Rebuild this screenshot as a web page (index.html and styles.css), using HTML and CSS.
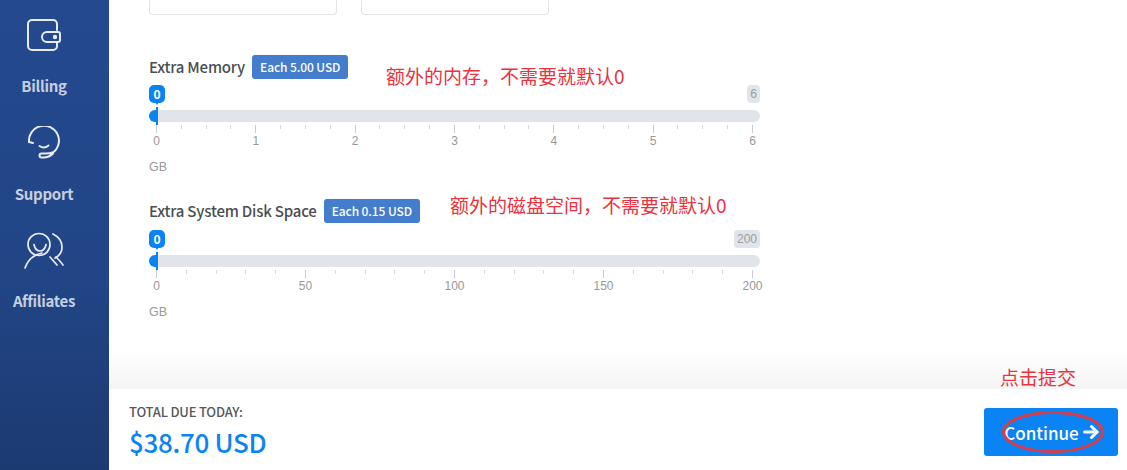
FILE: index.html
```html
<!DOCTYPE html>
<html lang="zh-CN">
<head>
<meta charset="utf-8">
<title>Extra resources</title>
<link rel="stylesheet" href="styles.css">
</head>
<body>
<div class="page">
  <nav class="sidebar">
    <a class="nav-item nav-billing">
      <svg class="nav-icon" width="36" height="34" viewBox="0 0 36 34" fill="none" stroke="#e6ebf4" stroke-width="2" stroke-linecap="round" stroke-linejoin="round">
        <path d="M31 12V6a4 4 0 0 0-4-4H6a4 4 0 0 0-4 4v22a4 4 0 0 0 4 4h21a4 4 0 0 0 4-4v-4"/>
        <path d="M21 14h11a2 2 0 0 1 2 2v6a2 2 0 0 1-2 2H21a5 5 0 0 1 0-10z"/>
        <circle cx="29" cy="19" r="1.200" fill="#e6ebf4"/>
      </svg>
      <span class="nav-label">Billing</span>
    </a>
    <a class="nav-item nav-support">
      <svg class="nav-icon" width="38" height="36" viewBox="0 0 38 36" fill="none" stroke="#e6ebf4" stroke-width="2" stroke-linecap="round" stroke-linejoin="round">
        <path d="M4 16A15 15 0 1 1 27.500 27"/>
        <path d="M4 16l4 1"/>
        <path d="M14.500 20c3 2 6 2 9-.5"/>
        <path d="M27.500 26.500c-2 1-4 1-7 1h-4a2 2 0 0 0 0 4h2c4 0 7-1.500 9.500-4"/>
      </svg>
      <span class="nav-label">Support</span>
    </a>
    <a class="nav-item nav-affiliates">
      <svg class="nav-icon" width="42" height="38" viewBox="0 0 42 38" fill="none" stroke="#e6ebf4" stroke-width="1.700" stroke-linecap="round" stroke-linejoin="round">
        <circle cx="16" cy="12.500" r="11"/>
        <path d="M11 12.500c1 5 3 6.500 6 6.500s5-1.500 6-6.500"/>
        <path d="M30 2c6 3 9 8 9 13s-3 9-7 11"/>
        <path d="M2 36c2-6 7-13 17-15"/>
        <path d="M27 25l7 8"/>
        <path d="M33 25c2 2 5 5 7 8"/>
      </svg>
      <span class="nav-label">Affiliates</span>
    </a>
  </nav>

  <main class="main">
    <div class="content">
      <div class="cards">
        <div class="card"></div>
        <div class="card"></div>
      </div>

      <section class="option option-memory">
        <div class="option-head">
          <h3 class="option-title">Extra Memory</h3>
          <span class="badge">Each 5.00 USD</span>
        </div>
        <div class="slider">
          <div class="bubbles">
            <span class="bubble">0</span>
            <span class="bubble-max">6</span>
          </div>
          <div class="track"><span class="fill"></span></div>
          <div class="ticks">
            <i class="major"></i><i></i><i></i><i></i><i class="major"></i><i></i><i></i><i></i><i class="major"></i><i></i><i></i><i></i><i class="major"></i><i></i><i></i><i></i><i class="major"></i><i></i><i></i><i></i><i class="major"></i><i></i><i></i><i></i><i class="major"></i>
          </div>
          <div class="scale">
            <span>0</span><span>1</span><span>2</span><span>3</span><span>4</span><span>5</span><span>6</span>
          </div>
        </div>
        <div class="unit">GB</div>
        <p class="note note-memory">额外的内存，不需要就默认0</p>
      </section>

      <section class="option option-disk">
        <div class="option-head">
          <h3 class="option-title">Extra System Disk Space</h3>
          <span class="badge">Each 0.15 USD</span>
        </div>
        <div class="slider">
          <div class="bubbles">
            <span class="bubble">0</span>
            <span class="bubble-max">200</span>
          </div>
          <div class="track"><span class="fill"></span></div>
          <div class="ticks">
            <i class="major"></i><i></i><i></i><i></i><i></i><i class="major"></i><i></i><i></i><i></i><i></i><i class="major"></i><i></i><i></i><i></i><i></i><i class="major"></i><i></i><i></i><i></i><i></i><i class="major"></i>
          </div>
          <div class="scale">
            <span>0</span><span>50</span><span>100</span><span>150</span><span>200</span>
          </div>
        </div>
        <div class="unit">GB</div>
        <p class="note note-disk">额外的磁盘空间，不需要就默认0</p>
      </section>
    </div>

    <footer class="footer">
      <div class="total">
        <div class="total-label">TOTAL DUE TODAY:</div>
        <div class="total-price">$38.70 USD</div>
      </div>
      <button class="continue" type="button">
        <span>Continue</span>
        <svg width="16" height="16" viewBox="0 0 16 16" fill="none" stroke="#fff" stroke-width="3" stroke-linecap="round" stroke-linejoin="round">
          <path d="M1.500 8h12.500"/>
          <path d="M8.500 2.500L14 8l-5.500 5.500"/>
        </svg>
        <svg class="ellipse" width="102" height="42" viewBox="0 0 102 42" fill="none" stroke="#d2404f" stroke-width="3">
          <ellipse cx="51" cy="21" rx="49.500" ry="19.500"/>
        </svg>
      </button>
      <p class="note note-submit">点击提交</p>
    </footer>
  </main>
</div>
</body>
</html>
```
FILE: styles.css
```css
* { box-sizing: border-box; }
html, body { margin: 0; padding: 0; }
body {
  background: #fff;
  font-family: "Noto Sans CJK SC", "Noto Sans", sans-serif;
  color: #4a4d52;
}
.page { display: flex; width: 1127px; height: 470px; overflow: hidden; }

.sidebar {
  width: 109px;
  flex: none;
  padding-right: 21px;
  background: linear-gradient(180deg, #24498f 0%, #214585 60%, #1c3a72 100%);
  display: flex;
  flex-direction: column;
  align-items: center;
}
.nav-item { display: flex; flex-direction: column; align-items: center; }
.nav-billing { padding-top: 18px; }
.nav-support { padding-top: 28px; }
.nav-affiliates { padding-top: 26px; }
.nav-icon { display: block; }
.nav-label {
  font-size: 15px;
  font-weight: 700;
  line-height: 24px;
  color: #c6cfdf;
  letter-spacing: -0.3px;
  white-space: nowrap;
}
.nav-billing .nav-label { margin-top: 22px; }
.nav-support .nav-label { margin-top: 20px; }
.nav-affiliates .nav-label { margin-top: 19px; }

.main { flex: 1; display: flex; flex-direction: column; min-width: 0; }
.content { flex: 1; padding-left: 40px; }

.cards { display: flex; gap: 24px; height: 15px; }
.card {
  width: 188px;
  border: 1px solid #e2e4e8;
  border-top: 0;
  border-radius: 0 0 4px 4px;
}

.option { position: relative; width: 611px; }
.option-memory { margin-top: 40px; }
.option-disk { margin-top: 25px; }
.option-disk .slider { margin-top: 7px; }
.option-head { display: flex; align-items: center; gap: 7px; height: 24px; }
.option-title { margin: 0 0 1px; font-size: 15px; font-weight: 500; line-height: 24px; color: #4b4e54; letter-spacing: -0.2px; }
.badge {
  height: 24px;
  padding: 0 8px;
  background: #437dcc;
  border-radius: 3px;
  color: #fff;
  font-size: 12px;
  font-weight: 500;
  line-height: 24px;
  letter-spacing: -0.1px;
}

.slider { margin-top: 6px; }
.bubbles { display: flex; justify-content: space-between; align-items: flex-start; height: 25px; }
.bubble {
  position: relative;
  width: 16px;
  height: 18px;
  background: #0a84f5;
  border-radius: 5px;
  color: #fff;
  font-size: 12px;
  font-weight: 700;
  line-height: 18px;
  text-align: center;
}
.bubble::after {
  content: "";
  position: absolute;
  left: 6px;
  top: 17px;
  border: 2px solid transparent;
  border-top: 3px solid #0a84f5;
}
.bubble-max {
  height: 18px;
  padding: 0 3px;
  background: #e1e4e8;
  border-radius: 4px;
  color: #9a9da3;
  font-family: "Liberation Sans", Arial, sans-serif;
  font-size: 12px;
  line-height: 18px;
}
.track { position: relative; height: 12px; background: #e1e4e9; border-radius: 6px; }
.fill {
  position: absolute;
  left: 0;
  top: 0;
  bottom: 0;
  width: 9px;
  background: #0a84f5;
  border-radius: 6px 0 0 6px;
}
.fill::after {
  content: "";
  position: absolute;
  right: 0;
  top: -3px;
  bottom: -3px;
  width: 2px;
  background: #0a84f5;
}
.ticks { display: flex; justify-content: space-between; align-items: flex-start; height: 9px; margin: 3px 7px 0; }
.ticks i { display: block; width: 1px; height: 4px; background: #d7d9dd; }
.ticks i.major { height: 8px; background: #c9ccd1; }
.scale {
  display: flex;
  justify-content: space-between;
  margin: 0 7.500px;
  height: 14px;
  font-family: "Liberation Sans", Arial, sans-serif;
  font-size: 12px;
  line-height: 14px;
  color: #999;
}
.scale span { display: flex; justify-content: center; width: 0; white-space: nowrap; }
.unit {
  margin-top: 12px;
  font-family: "Liberation Sans", Arial, sans-serif;
  font-size: 12.500px;
  line-height: 14px;
  color: #999;
}

.note {
  position: absolute;
  margin: 0;
  font-family: "Noto Sans CJK SC", sans-serif;
  font-size: 19px;
  font-weight: 400;
  line-height: 24px;
  color: #e8343e;
  white-space: nowrap;
}
.note-memory { left: 237px; top: 9px; }
.note-disk { left: 301px; top: -6px; }
.note-submit { left: 891px; top: -24px; }

.footer {
  position: relative;
  flex: none;
  height: 81px;
  display: flex;
  justify-content: space-between;
  align-items: flex-start;
  padding: 15px 9px 0 20px;
  background: #fff;
}
.footer::before {
  content: "";
  position: absolute;
  left: 0;
  right: 0;
  bottom: 100%;
  height: 40px;
  background: linear-gradient(180deg, rgba(245,245,245,0) 0%, #f5f5f6 100%);
}
.total-label { font-size: 13px; font-weight: 500; line-height: 16px; color: #55585d; letter-spacing: -0.2px; }
.total-price { margin-top: 4px; font-size: 26px; font-weight: 500; line-height: 36px; color: #0a84f5; letter-spacing: -0.3px; }
.continue {
  position: relative;
  width: 134px;
  height: 48px;
  margin-top: 4px;
  display: flex;
  align-items: center;
  justify-content: center;
  gap: 4px;
  border: 0;
  border-radius: 3px;
  background: #0a84f5;
  color: #fff;
  font-family: "Noto Sans CJK SC", sans-serif;
  font-size: 17px;
  font-weight: 500;
  padding: 0 0 0 1px;
}
.ellipse { position: absolute; left: 18px; top: 3px; }
```
